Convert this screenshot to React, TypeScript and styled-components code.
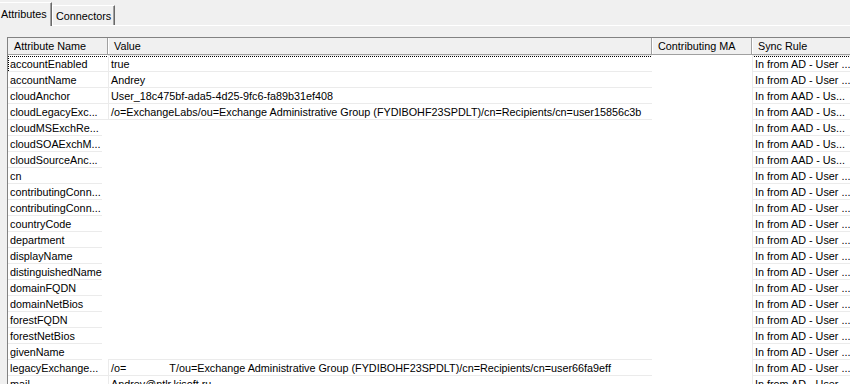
import React from 'react';
import styled, { createGlobalStyle, css } from 'styled-components';

const Global = createGlobalStyle`
  html, body { margin: 0; padding: 0; background: #f0f0f0; }
  body {
    font-family: "Liberation Sans", Arial, sans-serif;
    font-size: 10.8px;
    color: #000;
    overflow: hidden;
  }
`;

const COLS = '100px 544px 100px 1fr';
const GRID = '#ebebeb';

const Window = styled.div`
  width: 850px;
  height: 384px;
  overflow: hidden;
  display: flex;
  flex-direction: column;
  background: #f0f0f0;
`;

const TabStrip = styled.div`
  display: flex;
  align-items: flex-end;
  height: 26px;
  box-sizing: border-box;
  border-bottom: 1px solid #ffffff;
`;

const Tab = styled.div<{ $active?: boolean; $w: number }>`
  box-sizing: border-box;
  width: ${(p) => p.$w}px;
  background: #f0f0f0;
  border-top: 1px solid #ffffff;
  border-left: 1px solid #ffffff;
  border-right: 1px solid #696969;
  box-shadow: inset -1px 0 0 #a0a0a0;
  white-space: nowrap;
  line-height: 13px;
  ${(p) =>
    p.$active
      ? css`
          margin-left: -2px;
          height: 24px;
          margin-bottom: -1px;
          padding: 5px 0 0 2px;
          position: relative;
          z-index: 1;
        `
      : css`
          height: 20px;
          padding: 4px 0 0 3px;
        `}
`;

const Page = styled.div`
  flex: 1;
  display: flex;
  padding: 11px 0 0 7px;
  min-height: 0;
`;

const List = styled.div`
  flex: 1;
  min-width: 0;
  background: #ffffff;
  border-top: 1px solid #828282;
  border-left: 1px solid #828282;
  display: flex;
  flex-direction: column;
  overflow: hidden;
`;

const Header = styled.div`
  display: grid;
  grid-template-columns: ${COLS};
  height: 17px;
  box-sizing: border-box;
  background: #f0f0f0;
  border-bottom: 1px solid #a0a0a0;
  flex-shrink: 0;
`;

const HeaderCell = styled.div`
  box-sizing: border-box;
  padding: 1px 0 0 6px;
  line-height: 15px;
  border-right: 1px solid #a0a0a0;
  box-shadow: inset 1px 0 0 #ffffff;
  white-space: nowrap;
  overflow: hidden;
  &:first-child { box-shadow: none; }
  &:last-child { border-right: none; }
`;

const Body = styled.div`
  padding-top: 1px;
  display: flex;
  flex-direction: column;
`;

const Row = styled.div`
  display: grid;
  grid-template-columns: ${COLS};
  height: 16px;
  flex-shrink: 0;
`;

const dotsH = 'repeating-linear-gradient(to right, #000 0 1px, transparent 1px 2px)';
const dotsV = 'repeating-linear-gradient(to bottom, #000 0 1px, transparent 1px 2px)';
const line = `linear-gradient(${GRID}, ${GRID})`;

const NameCell = styled.div<{ $full?: boolean; $focus?: boolean }>`
  box-sizing: border-box;
  padding-left: 2px;
  line-height: 16px;
  white-space: nowrap;
  overflow: hidden;
  background-repeat: no-repeat;
  background-image: ${(p) => (p.$focus ? `${dotsH}, ${dotsV}, ${line}` : line)};
  background-size: ${(p) =>
    p.$focus
      ? `100% 1px, 1px 100%, ${p.$full ? '100%' : '94px'} 1px`
      : `${p.$full ? '100%' : '94px'} 1px`};
  background-position: ${(p) => (p.$focus ? '0 0, 0 0, 0 100%' : '0 100%')};
`;

const Cell = styled.div<{ $filled?: boolean; $focus?: boolean }>`
  box-sizing: border-box;
  padding-left: 3px;
  line-height: 16px;
  white-space: nowrap;
  overflow: hidden;
  ${(p) =>
    p.$filled &&
    css`
      box-shadow: 0 -1px 0 ${GRID}, inset 0 -1px 0 ${GRID}, inset 1px 0 0 ${GRID};
    `}
  ${(p) =>
    p.$focus &&
    css`
      background: ${dotsH} 0 0 / 100% 1px no-repeat;
    `}
`;

const Redacted = styled.span`
  display: inline-block;
  width: 43px;
`;

type Item = { name: string; value?: React.ReactNode; ma?: string; aad?: boolean };

const items: Item[] = [
  { name: 'accountEnabled', value: 'true' },
  { name: 'accountName', value: 'Andrey' },
  { name: 'cloudAnchor', value: 'User_18c475bf-ada5-4d25-9fc6-fa89b31ef408', aad: true },
  {
    name: 'cloudLegacyExc...',
    value: '/o=ExchangeLabs/ou=Exchange Administrative Group (FYDIBOHF23SPDLT)/cn=Recipients/cn=user15856c3b',
    aad: true,
  },
  { name: 'cloudMSExchRe...', aad: true },
  { name: 'cloudSOAExchM...', aad: true },
  { name: 'cloudSourceAnc...', aad: true },
  { name: 'cn' },
  { name: 'contributingConn...' },
  { name: 'contributingConn...' },
  { name: 'countryCode' },
  { name: 'department' },
  { name: 'displayName' },
  { name: 'distinguishedName' },
  { name: 'domainFQDN' },
  { name: 'domainNetBios' },
  { name: 'forestFQDN' },
  { name: 'forestNetBios' },
  { name: 'givenName' },
  {
    name: 'legacyExchange...',
    value: (
      <>
        /o=<Redacted />T/ou=Exchange Administrative Group (FYDIBOHF23SPDLT)/cn=Recipients/cn=user66fa9eff
      </>
    ),
  },
  { name: 'mail', value: 'Andrey@ntlr.kisoft.ru' },
];

export default function App() {
  return (
    <>
      <Global />
      <Window>
        <TabStrip>
          <Tab $active $w={54}>Attributes</Tab>
          <Tab $w={63}>Connectors</Tab>
        </TabStrip>
        <Page>
          <List>
            <Header>
              <HeaderCell>Attribute Name</HeaderCell>
              <HeaderCell>Value</HeaderCell>
              <HeaderCell>Contributing MA</HeaderCell>
              <HeaderCell>Sync Rule</HeaderCell>
            </Header>
            <Body>
              {items.map((it, i) => (
                <Row key={i}>
                  <NameCell $full={!!it.value} $focus={i === 0}>{it.name}</NameCell>
                  <Cell $filled={!!it.value} $focus={i === 0 && !!it.value}>{it.value}</Cell>
                  <Cell $filled={!!it.ma}>{it.ma}</Cell>
                  <Cell $filled $focus={i === 0}>
                    {it.aad ? 'In from AAD - Us...' : 'In from AD - User ...'}
                  </Cell>
                </Row>
              ))}
            </Body>
          </List>
        </Page>
      </Window>
    </>
  );
}
